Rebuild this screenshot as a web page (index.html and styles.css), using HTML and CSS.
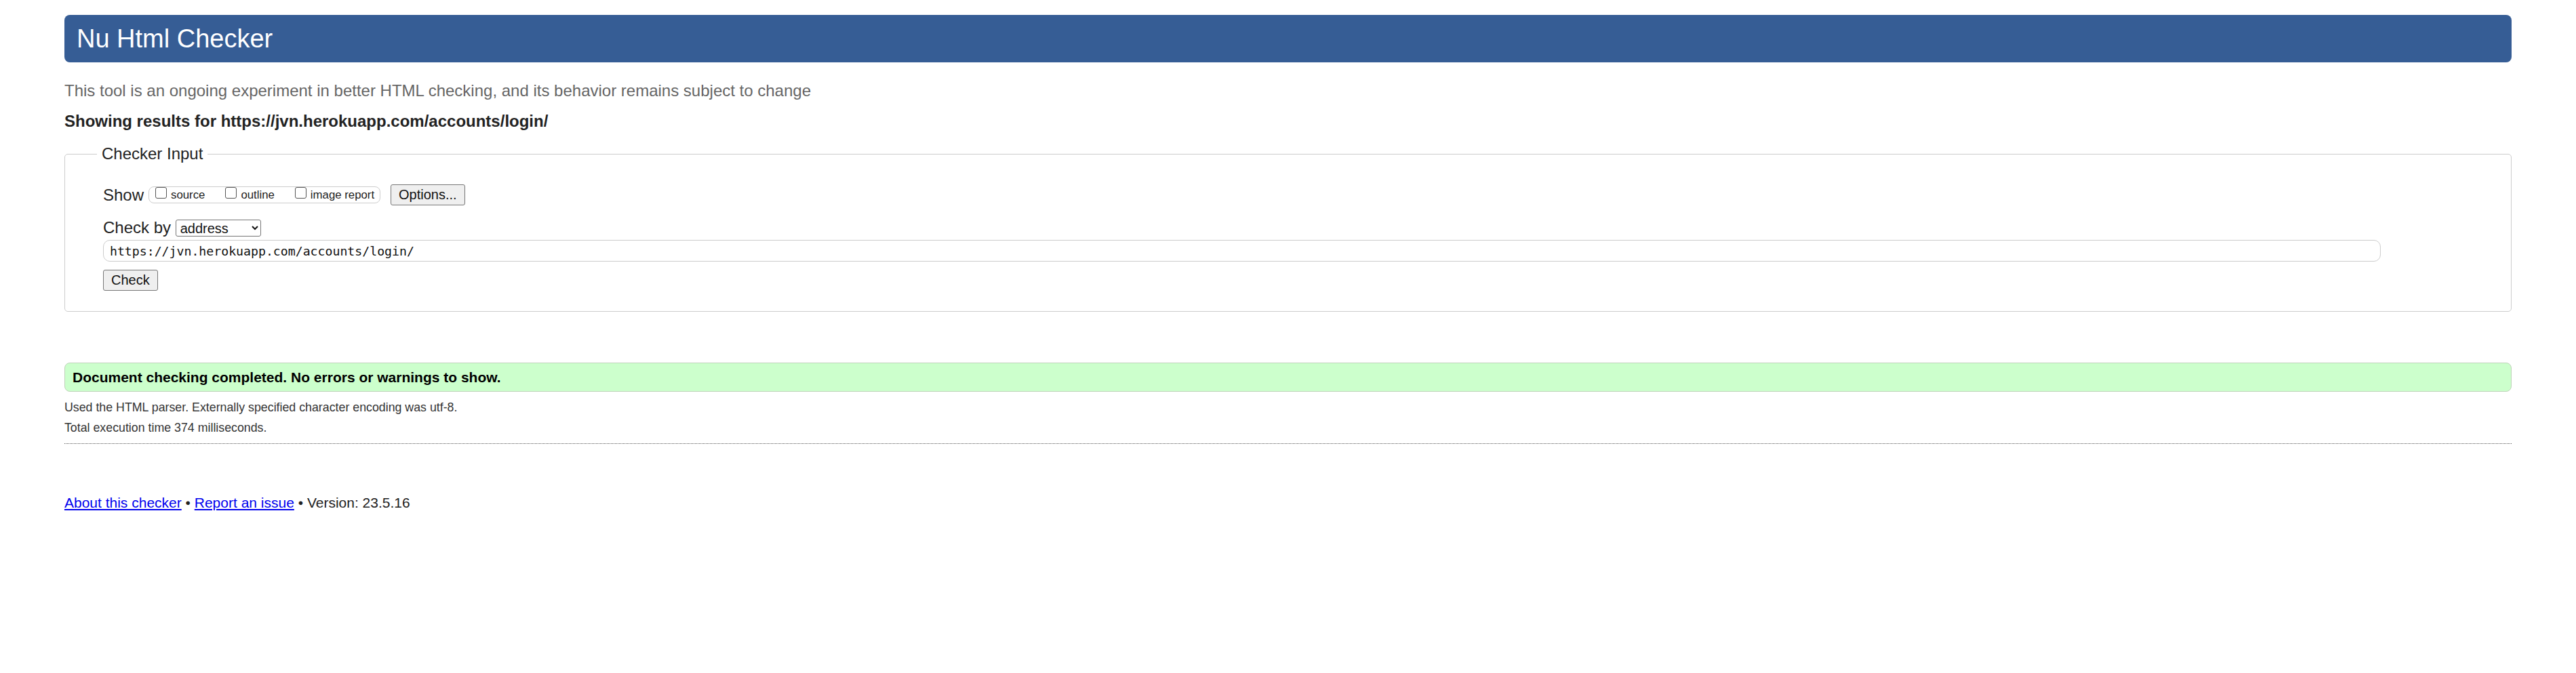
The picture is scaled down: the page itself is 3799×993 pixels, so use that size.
FILE: index.html
```html
<!DOCTYPE html>
<html lang="en">
<head>
<meta charset="UTF-8">
<meta name="viewport" content="width=device-width, initial-scale=1.0">
<title>Showing results for https://jvn.herokuapp.com/accounts/login/ - Nu Html Checker</title>
<link rel="stylesheet" href="styles.css">
</head>
<body>

<div class="page">
  <h1>Nu Html Checker</h1>
  <p class="intro">This tool is an ongoing experiment in better HTML checking, and its behavior remains subject to change</p>
  <p class="showing">Showing results for https://jvn.herokuapp.com/accounts/login/</p>

  <form id="checkerForm">
    <fieldset>
      <legend>Checker Input</legend>

      <div class="show-row">
        <span class="show-label">Show</span>
        <span class="opts">
          <label><input type="checkbox" name="showsource">source</label>
          <label><input type="checkbox" name="showoutline">outline</label>
          <label><input type="checkbox" name="showimagereport">image report</label>
        </span>
        <button type="button" class="options-btn">Options...</button>
      </div>

      <div class="by-row">
        <label for="docselect">Check by</label>
        <select id="docselect" name="docselect">
          <option value="address">address</option>
          <option value="file">file upload</option>
          <option value="text">text input</option>
        </select>
      </div>
      <input type="url" id="doc" name="doc" class="doc-input" value="https://jvn.herokuapp.com/accounts/login/">

      <button type="submit" class="check-btn">Check</button>
    </fieldset>
  </form>

  <p class="success">Document checking completed. No errors or warnings to show.</p>

  <div class="details">
    <p>Used the HTML parser. Externally specified character encoding was utf-8.</p>
    <p>Total execution time 374 milliseconds.</p>
  </div>

  <p class="footer"><a href="#">About this checker</a> &bull; <a href="#">Report an issue</a> &bull; Version: 23.5.16</p>
</div>

<script>
document.getElementById("checkerForm").addEventListener("submit", function(event) {
  event.preventDefault(); // no network here, keep the results as they are
});
</script>

</body>
</html>
```

FILE: styles.css
```css
body {
  margin: 0;
  font-family: "Liberation Sans", Arial, sans-serif;
  font-size: 24px;
  line-height: 36px;
  color: #222;
  background-color: #fff;
}

.page {
  width: 95%;
  margin: 0 auto;
}

h1 {
  margin: 22px 0 0;
  padding: 7px 18px;
  font-size: 38px;
  line-height: 56px;
  font-weight: normal;
  color: #fff;
  background-color: #365d95;
  border-radius: 8px;
}

p {
  margin: 0;
}

.intro {
  margin-top: 24px;
  color: #666;
}

.showing {
  margin-top: 9px;
  font-weight: bold;
}

fieldset {
  margin: 12px 0 0;
  padding: 27px 56px 30px;
  border: 1px solid #ccc;
  border-radius: 5px;
}

legend {
  margin-left: -9px;
  padding: 0 7px;
  line-height: 36px;
}

.show-row {
  display: flex;
  align-items: center;
  height: 31px;
}

.show-label {
  margin-right: 7px;
}

.opts {
  display: flex;
  gap: 30px;
  padding: 0 8px 0 9px;
  font-size: 16.8px;
  line-height: 23px;
  border: 1px solid #ccc;
  border-radius: 8px;
}

.opts input[type="checkbox"] {
  appearance: none;
  box-sizing: border-box;
  width: 17px;
  height: 17px;
  margin: 0 6px 0 0;
  vertical-align: baseline;
  background-color: #fff;
  border: 1px solid #555;
  border-radius: 3px;
}

button {
  font-family: "Liberation Sans", Arial, sans-serif;
  font-size: 20px;
  line-height: 23px;
  padding: 3px 11px;
  color: #111;
  background-color: #efefef;
  border: 1px solid #767676;
  border-radius: 3px;
  cursor: pointer;
}

.options-btn {
  margin-left: 15px;
}

.by-row {
  margin-top: 15px;
  line-height: 36px;
}

select {
  width: 126px;
  height: 25px;
  padding: 0 2px;
  font-family: "Liberation Sans", Arial, sans-serif;
  font-size: 20px;
  color: #111;
  background-color: #fff;
  border: 1px solid #767676;
  border-radius: 3px;
}

.doc-input {
  display: block;
  box-sizing: border-box;
  width: calc(100% - 136px);
  height: 32px;
  margin: 0;
  padding: 0 9px;
  font-family: "DejaVu Sans Mono", monospace;
  font-size: 18.2px;
  color: #111;
  border: 1px solid #ccc;
  border-radius: 10px;
}

.check-btn {
  display: block;
  margin-top: 12px;
}

.success {
  margin-top: 75px;
  padding: 5px 11px;
  font-size: 21px;
  line-height: 31px;
  font-weight: bold;
  color: #000;
  background-color: #ccffcc;
  border: 1px solid #bfd3b9;
  border-radius: 8px;
}

.details {
  margin-top: 8px;
  padding-bottom: 8px;
  font-size: 17.8px;
  line-height: 30px;
  color: #333;
  border-bottom: 1px dotted #555;
}

.footer {
  margin-top: 71px;
  font-size: 21px;
  line-height: 31px;
}

.footer a {
  color: #0000ee;
}
```
